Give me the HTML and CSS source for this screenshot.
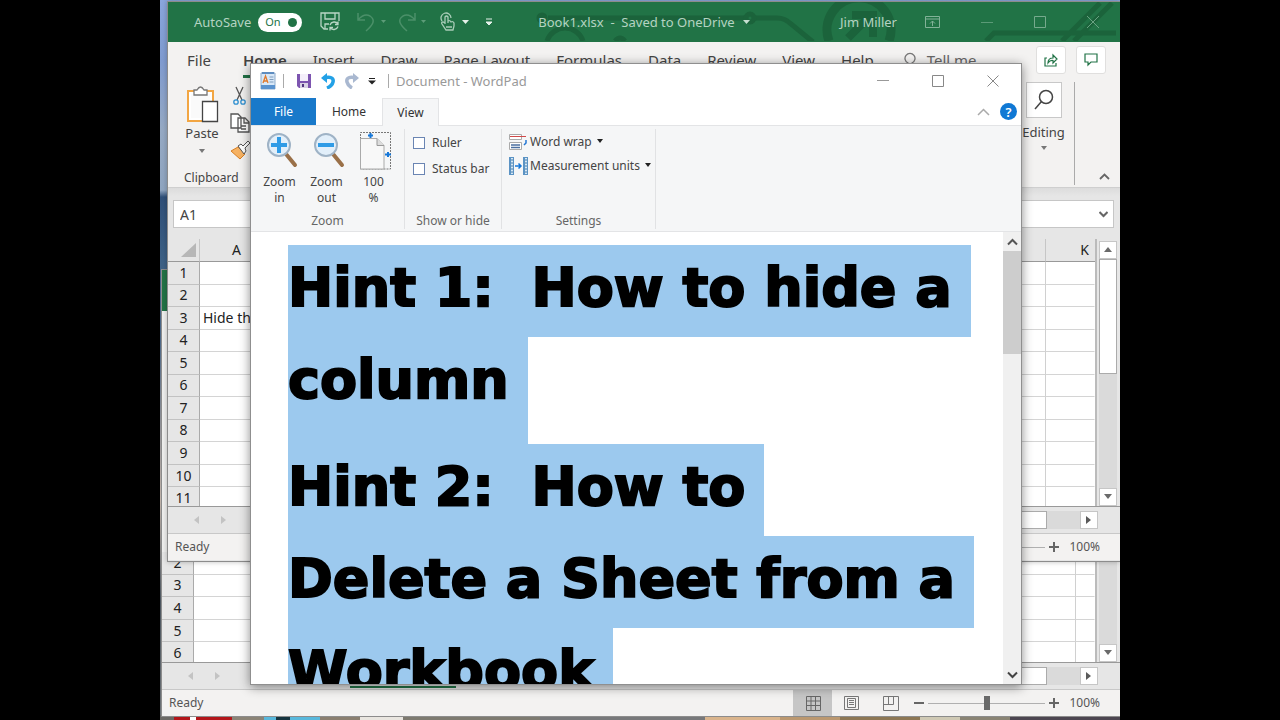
FILE: index.html
```html
<!DOCTYPE html>
<html lang="en">
<head>
<meta charset="utf-8">
<title>Document - WordPad</title>
<link rel="stylesheet" href="styles.css">
</head>
<body>
<main class="desktop">

  <section class="window excel-back" aria-label="Excel, background workbook">
    <div class="titlebar-plain"></div>
    <div class="back-fill"></div>
    <div class="sheet-area area-back">
      <table class="sheet sheet-back">
        <colgroup><col class="col-head"><col><col class="col-last-back"></colgroup>
        <tbody>
          <tr><th>2</th><td></td><td></td></tr>
          <tr><th>3</th><td></td><td></td></tr>
          <tr><th>4</th><td></td><td></td></tr>
          <tr><th>5</th><td></td><td></td></tr>
          <tr><th>6</th><td></td><td></td></tr>
        </tbody>
      </table>
      <div class="vscroll">
        <div class="vtrack"></div>
        <button class="sbtn" aria-label="Scroll down"><svg width="10" height="6"><path d="M1 0h8L5 5z" fill="#6a6a6a"/></svg></button>
      </div>
    </div>
    <div class="tabstrip">
      <span class="sheet-nav"><svg width="32" height="10"><path d="M5 1v8L0 5zM27 1v8l5-4z" fill="#c3c3c3"/></svg></span>
      <span class="sheet-tab"></span>
      <span class="hthumb"></span><span class="htrack"></span>
      <button class="sbtn" aria-label="Scroll right"><svg width="6" height="10"><path d="M0 1v8l5-4z" fill="#5a5a5a"/></svg></button>
    </div>
    <footer class="status">
      <span class="ready">Ready</span>
      <button class="view on" aria-label="Normal view"><svg width="16" height="16" fill="none" stroke="#666"><path d="M1.500 1.500h14v14h-14zM1.500 6h14M1.500 10.500h14M6 1.500v14M10.500 1.500v14"/></svg></button>
      <button class="view" aria-label="Page layout view"><svg width="17" height="16" fill="none" stroke="#777"><path d="M1.500 1.500h14v13h-14zM4.500 3.500h8v9h-8zM6 5.500h5M6 7.500h5M6 9.500h5"/></svg></button>
      <button class="view" aria-label="Page break view"><svg width="17" height="16" fill="none" stroke="#777"><path d="M1.500 1.500h15v14h-15zM1.500 9.500h10v-8M6.500 1.500v8"/></svg></button>
      <button class="zoom-btn" aria-label="Zoom out"><svg width="10" height="10"><path d="M0 5h10" stroke="#666" stroke-width="2"/></svg></button>
      <input class="zoom-range" type="range" min="0" max="100" value="50" aria-label="Zoom">
      <button class="zoom-btn" aria-label="Zoom in"><svg width="10" height="10"><path d="M0 5h10M5 0v10" stroke="#666" stroke-width="2"/></svg></button>
      <span class="zoom-text">100%</span>
    </footer>
  </section>

  <section class="window excel" aria-label="Excel, Book1.xlsx">
    <header class="xl-title">
      <svg class="circuit" width="620" height="39" viewBox="0 0 620 39" fill="none" stroke="#1b633b" stroke-width="5">
        <path d="M48 16h197M255 16h22q8 0 14 6l22 18"/>
        <circle cx="42" cy="16" r="3"/><circle cx="250" cy="16" r="4"/>
        <path d="M47 39a19 19 0 0 1 36 0M115 39q5-6 10 0"/>
        <path d="M329 39a32 32 0 1 1 60 0" stroke-width="9"/>
        <path d="M348 36l24-24M352 13h21v22" stroke-width="8"/>
        <path d="M486 39l8-8h122M562 39l38-38M574 39l38-38"/>
      </svg>
      <label class="autosave">AutoSave<input type="checkbox" checked><span class="toggle">On<i></i></span></label>
      <div class="quick">
        <button aria-label="Save"><svg width="20" height="20" fill="none" stroke="#b9d6c5" stroke-width="1.300"><path d="M8 17H4l-3-3V1h18v8M5 1v6h10V1M5 17v-5h4M18 12a4.500 4.500 0 0 0-8 1M10 15.500a4.500 4.500 0 0 0 8-1M18 9.500v3h-3M10 18.500v-3h3"/></svg></button>
        <button class="dim" aria-label="Undo"><svg width="29" height="20" fill="none" stroke="#4b9069" stroke-width="1.500"><path d="M1 1v7h7M1 8q6-7 12-4c6 4 3 9-4 15"/><path d="M24 8h5l-2.500 3z" fill="#5c9c78" stroke="none"/></svg></button>
        <button class="dim" aria-label="Redo"><svg width="27" height="20" fill="none" stroke="#4b9069" stroke-width="1.500"><path d="M16 1v7H9M16 8Q10 1 4 4c-6 4-3 9 4 15"/><path d="M22 8h5l-2.500 3z" fill="#5c9c78" stroke="none"/></svg></button>
        <button aria-label="Touch mode"><svg width="30" height="20" fill="none" stroke="#a9cdb8" stroke-width="1.300"><path d="M3 9A5 5 0 1 1 12 6M6 12V5q1.500-2 3 0v6M6 11l-2-1q-2 0-1 2l4 6h7l1-4v-3q-1-2-3-1-1-2-3-1M7 15h6"/><path d="M23 8h7l-3.500 4z" fill="#e6f1ea" stroke="none"/></svg></button>
        <button aria-label="Customize toolbar"><svg width="6" height="8"><path d="M0 1h6M0 4h6L3 7z" fill="#e6f1ea" stroke="#e6f1ea" stroke-width="1"/></svg></button>
      </div>
      <h2 class="book">Book1.xlsx&nbsp; -&nbsp; Saved to OneDrive <svg width="7" height="4"><path d="M0 0h7L3.500 4z" fill="#c6dfd1"/></svg></h2>
      <span class="user">Jim Miller</span>
      <button class="xl-ctl" aria-label="Ribbon display"><svg width="15" height="12" fill="none" stroke="#82b298"><path d="M.5.5h14v11H.5zM.5 3h14M7.500 10V5M5 7.500L7.500 5 10 7.500"/></svg></button>
      <button class="xl-ctl" aria-label="Minimize"><svg width="12" height="12"><path d="M0 6.500h12" stroke="#5b9a77"/></svg></button>
      <button class="xl-ctl" aria-label="Maximize"><svg width="12" height="12" fill="none"><path d="M.5.5h11v11H.5z" stroke="#76aa8d"/></svg></button>
      <button class="xl-ctl" aria-label="Close"><svg width="12" height="12"><path d="M0 0l12 12M12 0L0 12" stroke="#69a282"/></svg></button>
    </header>

    <nav class="xl-tabs">
      <button>File</button><button class="sel">Home</button><button>Insert</button><button>Draw</button><button>Page Layout</button><button>Formulas</button><button>Data</button><button>Review</button><button>View</button><button>Help</button>
      <button class="tell"><svg width="12" height="16" fill="none" stroke="#777" stroke-width="1.300"><path d="M4 14v-3a5 5 0 1 1 4 0v3z"/></svg>Tell me</button>
      <span class="share">
        <button aria-label="Share"><svg width="14" height="14" fill="none" stroke="#217346" stroke-width="1.200"><path d="M3 5H1v8h11v-3M4 10q0-5 5-5V2l4 4-4 4V7.500Q6 7 4 10z"/></svg></button>
        <button aria-label="Comments"><svg width="14" height="14" fill="none" stroke="#217346" stroke-width="1.200"><path d="M1 1h12v8H7l-3 3V9H1z"/></svg></button>
      </span>
    </nav>

    <div class="xl-ribbon">
      <div class="clip">
        <div class="clip-row">
          <button class="paste">
            <svg width="34" height="40" fill="none"><path d="M3 6h25v30H3z" stroke="#f2a643" stroke-width="2" fill="#fff"/><path d="M6 9h19v24H6z" fill="#fafafa"/><path d="M9 10V5h3q3.500-6 7 0h3v5z" fill="#fff" stroke="#777" stroke-width="1.300"/><path d="M17.500 16.500h15v20h-15z" fill="#fff" stroke="#444" stroke-width="1.300"/></svg>
            Paste
            <svg width="6" height="4"><path d="M0 0h6L3 4z" fill="#777"/></svg>
          </button>
          <div class="clip-col">
            <button aria-label="Cut"><svg width="18" height="20" fill="none" stroke="#555" stroke-width="1.300"><path d="M5 1l6 13M12 1L6 14"/><g stroke="#2e8fd0"><circle cx="5" cy="16" r="2.200"/><circle cx="12" cy="16" r="2.200"/></g></svg></button>
            <button aria-label="Copy"><svg width="20" height="20" fill="#fff" stroke="#555" stroke-width="1.300"><path d="M1 1h7l3 3v11H1zM8 5h7l4 4v10H8zM14 5v5h5M11 13h5M11 16h5"/></svg></button>
            <button aria-label="Format painter"><svg width="20" height="20"><path d="M1 11l7-4 7 7-5 5z" fill="#f6b263" stroke="#d97f22"/><path d="M8 6l3-2 2 2 5-5 2 2-5 5 1 3-2 3z" fill="#fff" stroke="#555"/></svg></button>
          </div>
        </div>
        <span class="group-name">Clipboard</span>
      </div>
      <div class="editing">
        <button class="find" aria-label="Find"><svg width="20" height="22" fill="none" stroke="#444" stroke-width="1.500"><circle cx="12" cy="8" r="6.500"/><path d="M7.500 12.500L1 20"/></svg></button>
        <span>Editing</span>
        <svg width="6" height="4"><path d="M0 0h6L3 4z" fill="#777"/></svg>
      </div>
      <button class="collapse" aria-label="Collapse ribbon"><svg width="11" height="8" fill="none"><path d="M1 6l4.500-4.500L10 6" stroke="#666" stroke-width="1.800"/></svg></button>
    </div>

    <div class="formula">
      <input class="namebox" value="A1" aria-label="Name box">
      <input class="fx" aria-label="Formula">
      <button class="fx-drop" aria-label="Expand formula bar"><svg width="9" height="7" fill="none"><path d="M.5 1l4 4 4-4" stroke="#666" stroke-width="2"/></svg></button>
    </div>

    <div class="sheet-area area-front">
      <table class="sheet sheet-front">
        <colgroup><col class="col-head"><col class="col-a"><col><col class="col-last"></colgroup>
        <thead><tr><th class="corner"><svg width="15" height="15"><path d="M15 0v14H0z" fill="#b7b7b7"/></svg></th><th>A</th><th></th><th class="k">K</th></tr></thead>
        <tbody>
          <tr><th>1</th><td></td><td></td><td></td></tr>
          <tr><th>2</th><td></td><td></td><td></td></tr>
          <tr><th>3</th><td>Hide this</td><td></td><td></td></tr>
          <tr><th>4</th><td></td><td></td><td></td></tr>
          <tr><th>5</th><td></td><td></td><td></td></tr>
          <tr><th>6</th><td></td><td></td><td></td></tr>
          <tr><th>7</th><td></td><td></td><td></td></tr>
          <tr><th>8</th><td></td><td></td><td></td></tr>
          <tr><th>9</th><td></td><td></td><td></td></tr>
          <tr><th>10</th><td></td><td></td><td></td></tr>
          <tr><th>11</th><td></td><td></td><td></td></tr>
        </tbody>
      </table>
      <div class="vscroll">
        <button class="sbtn" aria-label="Scroll up"><svg width="10" height="6"><path d="M1 5h8L5 0z" fill="#6a6a6a"/></svg></button>
        <div class="vthumb"></div>
        <div class="vtrack"></div>
        <button class="sbtn" aria-label="Scroll down"><svg width="10" height="6"><path d="M1 0h8L5 5z" fill="#6a6a6a"/></svg></button>
      </div>
    </div>
    <div class="tabstrip">
      <span class="sheet-nav"><svg width="32" height="10"><path d="M5 1v8L0 5zM27 1v8l5-4z" fill="#c3c3c3"/></svg></span>
      <span class="hthumb"></span><span class="htrack"></span>
      <button class="sbtn" aria-label="Scroll right"><svg width="6" height="10"><path d="M0 1v8l5-4z" fill="#5a5a5a"/></svg></button>
    </div>
    <footer class="status">
      <span class="ready">Ready</span>
      <input class="zoom-range" type="range" min="0" max="100" value="50" aria-label="Zoom">
      <button class="zoom-btn" aria-label="Zoom in"><svg width="10" height="10"><path d="M0 5h10M5 0v10" stroke="#666" stroke-width="2"/></svg></button>
      <span class="zoom-text">100%</span>
    </footer>
  </section>

  <section class="window wordpad" aria-label="WordPad">
    <header class="wp-title">
      <svg width="16" height="18"><path d="M1 1h14v16H1z" fill="#d8e8f8" stroke="#8fabc9"/><path d="M1 13h14v4H1z" fill="#5a93cf"/><path d="M2 1h12" stroke="#5e8dc0" stroke-width="2"/><path d="M3 11l2.500-7L8 11M4 9h3" stroke="#e07a2c" stroke-width="1.300" fill="none"/><path d="M9.500 5h4M9.500 7.500h4M9.500 10h4" stroke="#7e9cbc"/></svg>
      <span class="bar"></span>
      <button aria-label="Save"><svg width="16" height="16"><path d="M1 1h14v14H3l-2-2z" fill="#7d55b0"/><path d="M4 1h8v7H4z" fill="#f4effa"/><path d="M4 10h8v5H4z" fill="#d9d3e4"/><path d="M6 11h2v3H6z" fill="#513680"/></svg></button>
      <button aria-label="Undo"><svg width="16" height="16" fill="none"><path d="M4 5c6-2 10 0 9 4q-1 4-6 6" stroke="#23a1e6" stroke-width="3.500"/><path d="M1 5l6-5v10z" fill="#23a1e6"/></svg></button>
      <button aria-label="Redo"><svg width="16" height="16" fill="none"><path d="M12 5C6 3 2 5 3 9q1 4 5 6" stroke="#a9b8d0" stroke-width="3.500"/><path d="M15 5L9 0v10z" fill="#a9b8d0"/></svg></button>
      <button aria-label="Customize"><svg width="8" height="8"><path d="M1 1.500h6" stroke="#222"/><path d="M0 3.500h8L4 7.500z" fill="#222"/></svg></button>
      <span class="bar"></span>
      <h1>Document - WordPad</h1>
      <button class="wp-ctl" aria-label="Minimize"><svg width="12" height="12"><path d="M0 5.500h12" stroke="#999"/></svg></button>
      <button class="wp-ctl" aria-label="Maximize"><svg width="12" height="12"><path d="M.5.5h11v11H.5z" fill="none" stroke="#888"/></svg></button>
      <button class="wp-ctl" aria-label="Close"><svg width="12" height="12"><path d="M.5.5l11 11M11.500.5l-11 11" stroke="#888"/></svg></button>
    </header>
    <nav class="wp-tabs">
      <button class="file">File</button><button>Home</button><button class="sel">View</button>
      <span class="wp-help">
        <button aria-label="Minimize ribbon"><svg width="13" height="8" fill="none"><path d="M1 7l5.500-5.500L12 7" stroke="#aaa" stroke-width="1.500"/></svg></button>
        <button class="help" aria-label="Help">?</button>
      </span>
    </nav>
    <div class="wp-ribbon">
      <div class="group g-zoom">
        <div class="big">
          <button><svg width="32" height="36"><path d="M20 22l9 11" stroke="#9a7048" stroke-width="4" stroke-linecap="round"/><circle cx="13" cy="13" r="11" fill="#e2effa" stroke="#9fb3c6" stroke-width="2"/><path d="M13 5v16M5 13h16" stroke="#2f9be6" stroke-width="4"/></svg>Zoom<br>in</button>
          <button><svg width="32" height="36"><path d="M20 22l9 11" stroke="#9a7048" stroke-width="4" stroke-linecap="round"/><circle cx="13" cy="13" r="11" fill="#e2effa" stroke="#9fb3c6" stroke-width="2"/><path d="M5 13h16" stroke="#2f9be6" stroke-width="4"/></svg>Zoom<br>out</button>
          <button><svg width="32" height="38"><path d="M.5 37V.5h30V37z" fill="none" stroke="#777" stroke-dasharray="2 1"/><path d="M.5 6.500H17l7 7V37H.5z" fill="#f8f8f8" stroke="#aaa"/><path d="M17 6.500V13.500h7" fill="#ddd" stroke="#999"/><path d="M10.500 1v5M8 3.500h5M25 22.500h6M28 20v5" stroke="#1677d8" stroke-width="2"/></svg>100<br>%</button>
        </div>
        <span class="group-label">Zoom</span>
      </div>
      <div class="group g-show">
        <div class="checks">
          <label><input type="checkbox">Ruler</label>
          <label><input type="checkbox">Status bar</label>
        </div>
        <span class="group-label">Show or hide</span>
      </div>
      <div class="group g-set">
        <div class="menus">
          <button><svg width="19" height="18" fill="none"><path d="M.5 1.500h12v5H.5zM.5 9.500h12v7H.5z" fill="#fff" stroke="#aaa"/><path d="M1 3.500h16" stroke="#d04a4a"/><path d="M2 12h9M2 14.500h9" stroke="#4b6fa0" stroke-width="1.500"/><path d="M17 7v3l-2 2" stroke="#2377d4" stroke-width="1.500"/></svg>Word wrap<svg class="dd" width="6" height="4"><path d="M0 0h6L3 4z" fill="#222"/></svg></button>
          <button><svg width="19" height="18"><path d="M0 0h5v18H0zM14 0h5v18h-5z" fill="#5b93c4"/><path d="M2 1h2v16H2zM16 1h2v16h-2z" fill="#d6e8f5"/><path d="M2 3h2M2 6h2M2 9h2M2 12h2M2 15h2M16 3h2M16 6h2M16 9h2M16 12h2M16 15h2" stroke="#427bac"/><path d="M6 9h6M9.500 6.500L12 9l-2.500 2.500" stroke="#1677d8" stroke-width="1.500" fill="none"/></svg>Measurement units<svg class="dd" width="6" height="4"><path d="M0 0h6L3 4z" fill="#222"/></svg></button>
        </div>
        <span class="group-label">Settings</span>
      </div>
    </div>
    <div class="wp-body">
      <article class="doc">
        <p><span>Hint 1:  How to hide a </span><span>column </span></p>
        <p><span>Hint 2:  How to </span><span>Delete a Sheet from a </span><span>Workbook </span></p>
      </article>
      <div class="wp-scroll">
        <button aria-label="Scroll up"><svg width="11" height="8" fill="none"><path d="M1 6.500l4.500-4.500L10 6.500" stroke="#555" stroke-width="2"/></svg></button>
        <div class="wp-thumb"></div>
        <button class="down" aria-label="Scroll down"><svg width="11" height="8" fill="none"><path d="M1 1.500L5.500 6 10 1.500" stroke="#444" stroke-width="2"/></svg></button>
      </div>
    </div>
  </section>
</main>
</body>
</html>
```
FILE: styles.css
```css
* { box-sizing: border-box; }
body { margin: 0; background: #000; font: 12px/16px "Noto Sans", sans-serif; color: #444; }
button { border: 0; padding: 0; background: none; font: inherit; color: inherit; display: flex; align-items: center; justify-content: center; }
svg { display: block; flex: none; }
h1, h2, p { margin: 0; font: inherit; }

.desktop {
  position: relative;
  width: 75%;
  height: 100vh;
  margin: 0 auto;
  overflow: hidden;
  background:
    linear-gradient(90deg, #6c6a66 0 14px, #b3161a 14px 30px, #fff 30px 36px, #b3161a 36px 72px, #8b8477 72px 104px, #58b8dc 104px 116px, #15343f 116px 130px, #58b8dc 130px 160px, #8a7f70 160px 200px, #e9e6e0 200px 243px, #7d7a70 243px 380px, #77787a 380px 545px, #d9b48c 545px 620px, #bb9870 620px 680px, #8d7754 680px 760px, #cfc9b4 760px 800px, #8a8474 800px 850px, #4c4650 850px) 0 100% / 100% 5px no-repeat,
    linear-gradient(180deg, #8aa6dc 0, #7f9bd0 60px, #96aac4 130px, #8fa5c0 190px, #2f4f78 197px, #3d6085 260px, #4d6888 340px, #8d8f96 420px, #c0b3aa 500px, #4c5660 600px, #6f7478 100%);
}
.window { position: absolute; display: flex; flex-direction: column; }

/* Excel windows */
.excel-back { top: 269px; left: 1px; right: 0; height: 448px; background: #e6e6e6; border: 1px solid #8c8c8c; border-right: 0; }
.titlebar-plain { height: 41px; background: #217346; }
.back-fill { flex: 1; background: #efefee; }
.excel { top: 1px; left: 7px; right: 0; height: 561px; background: #e6e6e6; border: 1px solid #8c8c8c; border-right: 0; box-shadow: 0 0 5px rgba(0,0,0,.25); }

.xl-title { position: relative; display: flex; align-items: center; height: 40px; padding: 0 21px 0 26px; background: #217346; color: #b5d3c2; font-size: 13px; white-space: nowrap; }
.xl-title > * { position: relative; }
.xl-title .circuit { position: absolute; right: 0; top: 0; }
.autosave { display: flex; align-items: center; gap: 7px; }
.autosave input { position: absolute; opacity: 0; }
.toggle { display: flex; align-items: center; justify-content: space-between; width: 44px; height: 19px; padding: 0 5px 0 7px; border-radius: 10px; background: #fff; color: #217346; font-size: 11px; }
.toggle i { width: 9px; height: 9px; border-radius: 50%; background: #217346; }
.quick { display: flex; align-items: center; gap: 13px; margin-left: 18px; }
.quick button:first-child { margin-right: 4px; }
.quick button:last-child { margin-left: 4px; }
.book { display: flex; align-items: center; gap: 8px; margin-left: 46px; }
.user { margin-left: auto; margin-right: 28px; }
.xl-ctl + .xl-ctl { margin-left: 41px; }

.xl-tabs { display: flex; align-items: center; gap: 26px; height: 36px; padding: 0 14px 0 19px; background: #f3f2f1; font-size: 15px; white-space: nowrap; }
.xl-tabs .sel { font-weight: 600; height: 36px; border-bottom: 3px solid #217346; border-top: 3px solid transparent; }
.xl-tabs > button:first-child { margin-right: 6px; }
.tell { gap: 11px; margin-left: 4px; color: #666; }
.share { display: flex; gap: 10px; margin-left: auto; }
.share button { width: 30px; height: 28px; border: 1px solid #e0dfde; border-radius: 3px; background: #fff; }

.xl-ribbon { display: flex; height: 110px; padding: 4px 10px 0 16px; background: #f3f2f1; border-bottom: 1px solid #cfcfcf; }
.clip { display: flex; flex-direction: column; width: 80px; font-size: 13px; }
.clip-row { display: flex; gap: 10px; height: 88px; }
.paste { flex-direction: column; justify-content: flex-start; padding-top: 3px; width: 36px; }
.paste svg:last-child { margin-top: 8px; }
.clip-col { display: flex; flex-direction: column; gap: 7px; padding-top: 4px; }
.group-name { font-size: 12px; }
.editing { display: flex; flex-direction: column; align-items: center; gap: 6px; width: 62px; height: 103px; margin-left: auto; border-right: 1px solid #aaa; font-size: 13px; }
.find { width: 36px; height: 36px; border: 1px solid #c8c8c8; background: #fff; }
.collapse { align-self: flex-end; margin: 0 0 6px 24px; }

.formula { display: flex; height: 51px; padding: 12px 6px 11px 5px; background: linear-gradient(#dcdcdc, #e6e6e6 8px); }
.formula input { border: 1px solid #c6c6c6; background: #fff; font: 14px "Noto Sans", sans-serif; color: #444; height: 28px; min-width: 0; }
.namebox { width: 120px; padding: 0 6px; }
.formula .fx { flex: 1; border-width: 1px 0; }
.fx-drop { width: 20px; height: 28px; background: #fff; border: 1px solid #c6c6c6; border-left: 0; }

.sheet-area { display: flex; align-items: flex-start; gap: 2px; padding-right: 3px; overflow: hidden; border-bottom: 1px solid #999; }
.area-front { height: 268px; flex: none; }
.area-back { height: 111px; flex: none; }
.sheet { flex: 1; border-collapse: separate; border-spacing: 0; table-layout: fixed; width: 100%; color: #222; font-size: 14px; line-height: 16px; border-right: 2px solid #bbb; background: #fff; }
.sheet-front { height: 271px; }
.sheet-back { height: 113px; }
.sheet th { padding: 0; font-weight: 400; background: #e6e6e6; border-right: 1px solid #aaa; border-bottom: 1px solid #c2c2c2; }
.sheet td { padding: 0 3px; border-right: 1px solid #d0d0d0; border-bottom: 1px solid #d4d4d4; white-space: nowrap; overflow: hidden; }
.sheet td:last-child { border-right-color: transparent; }
.sheet thead th { height: 23px; border-bottom: 1px solid #999; border-right-color: #c6c6c6; }
.sheet .k { text-align: right; padding-right: 6px; border-right: 0; }
.corner svg { margin-left: 13px; }
.col-head { width: 32px; }
.col-a { width: 74px; }
.col-last { width: 49px; }
.col-last-back { width: 19px; }

.vscroll { display: flex; flex-direction: column; align-self: stretch; width: 18px; padding-top: 2px; }
.sbtn { width: 18px; height: 18px; flex: none; border: 1px solid #c6c6c6; background: #fff; }
.vthumb { height: 115px; border: 1px solid #ababab; background: #fff; }
.vtrack { flex: 1; background: #dadada; }
.tabstrip { display: flex; align-items: center; height: 27px; padding: 0 22px 0 26px; border-bottom: 1px solid #c8c8c8; }
.sheet-tab { width: 106px; height: 24px; margin-left: 130px; border-bottom: 2px solid #217346; }
.hthumb { width: 400px; height: 18px; margin-left: auto; background: #fff; border: 1px solid #ababab; }
.htrack { width: 33px; height: 18px; background: #dadada; }
.status { display: flex; align-items: center; height: 26px; padding: 0 20px 0 7px; background: #f3f2f1; color: #555; font-size: 12px; }
.ready { margin-right: auto; }
.view { width: 39px; height: 26px; }
.view.on { background: #c6c6c6; }
.zoom-btn { width: 10px; height: 20px; }
.view + .zoom-btn { margin-left: 4px; }
.zoom-range { appearance: none; width: 117px; height: 20px; margin: 0 4px; background: linear-gradient(#b0b0b0, #b0b0b0) 0 50% / 100% 1px no-repeat; }
.zoom-range::-webkit-slider-thumb { appearance: none; width: 6px; height: 14px; background: #6a6a6a; }
.zoom-text { margin-left: 10px; }

/* WordPad */
.wordpad { top: 63px; left: 90px; width: 772px; height: 622px; background: #fff; border: 1px solid #8f8f8f; box-shadow: 0 2px 10px rgba(0,0,0,.45); font-size: 12px; }
.wp-title { display: flex; align-items: center; height: 34px; padding: 0 22px 0 9px; color: #999; }
.wp-title .bar { width: 1px; height: 14px; background: #aaa; margin: 0 12px 0 7px; }
.wp-title button + button { margin-left: 8px; }
.wp-title button + .bar { margin: 0 7px 0 12px; }
.wp-title h1 { margin-right: auto; font-size: 13px; }
.wp-title .wp-ctl + .wp-ctl { margin-left: 43px; }
.wp-tabs { display: flex; height: 28px; border-bottom: 1px solid #e3e4e6; color: #333; }
.wp-tabs .file { width: 65px; background: #1979ca; color: #fff; height: 27px; }
.wp-tabs > button { width: 66px; }
.wp-tabs > .sel { width: 57px; height: 28px; background: #f5f6f7; border: 1px solid #e3e4e6; border-bottom: 0; }
.wp-help { display: flex; align-items: center; gap: 10px; margin-left: auto; padding-right: 4px; }
.help { width: 17px; height: 17px; border-radius: 50%; background: #0f78d4; color: #fff; font-size: 13px; font-weight: 600; }
.wp-ribbon { display: flex; height: 106px; padding: 3px 0 2px; background: #f5f6f7; border-bottom: 1px solid #e3e4e6; }
.group { display: flex; flex-direction: column; justify-content: space-between; border-right: 1px solid #e1e2e4; }
.group-label { text-align: center; color: #666; }
.g-zoom { width: 154px; }
.big { padding-left: 5px; }
.g-show { width: 97px; }
.g-set { width: 154px; }
.big { display: flex; }
.big button { display: block; width: 47px; text-align: center; }
.big svg { height: 38px; margin: 3px auto 4px 10px; }
.checks { display: flex; flex-direction: column; gap: 10px; padding: 6px 0 0 8px; }
.checks label { display: flex; align-items: center; gap: 7px; white-space: nowrap; }
.checks input { appearance: none; width: 12px; height: 12px; margin: 0; border: 1px solid #6a85b3; background: #fff; }
.menus { display: flex; flex-direction: column; align-items: flex-start; gap: 6px; padding: 4px 0 0 7px; }
.menus button { gap: 2px; height: 18px; white-space: nowrap; }
.menus .dd { margin: 0 0 3px 3px; }
.wp-body { display: flex; flex: 1; min-height: 0; }
.doc { flex: 1; min-width: 0; overflow: hidden; padding: 13px 0 0 37px; color: #000; font: 700 54px/86px "DejaVu Sans", sans-serif; -webkit-text-stroke: 2px #000; }
.doc span { display: block; width: fit-content; padding-bottom: 6px; background: #9cc9ee; white-space: pre; }
.doc p:first-child span:last-child { padding-bottom: 21px; }
.wp-scroll { display: flex; flex-direction: column; width: 18px; background: #f0f0f0; }
.wp-scroll button { height: 19px; }
.wp-thumb { height: 103px; background: #cdcdcd; }
.wp-scroll .down { margin-top: auto; }
```
